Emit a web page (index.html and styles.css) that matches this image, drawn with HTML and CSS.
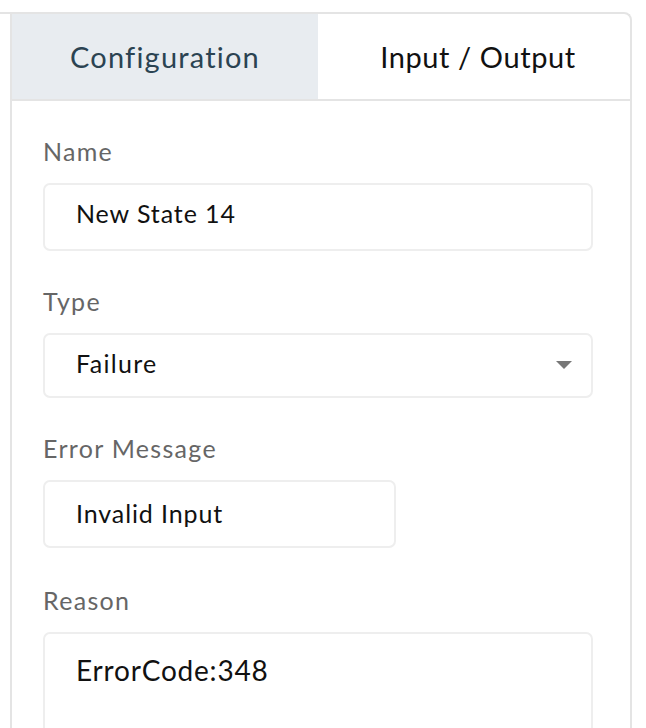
FILE: index.html
```html
<!DOCTYPE html>
<html lang="en">
<head>
<meta charset="utf-8">
<title>State configuration</title>
<link rel="stylesheet" href="styles.css">
</head>
<body>
<div class="frame">
  <div class="panel">
    <div class="inner">
      <div class="tabs">
        <div class="tab tab-active">Configuration</div>
        <div class="tab tab-plain">Input / Output</div>
      </div>
      <div class="form">
        <div class="field">
          <div class="label">Name</div>
          <div class="control">New State 14</div>
        </div>
        <div class="field field-select">
          <div class="label">Type</div>
          <div class="control select">
            <span>Failure</span>
            <span class="caret"></span>
          </div>
        </div>
        <div class="field field-error">
          <div class="label">Error Message</div>
          <div class="control short">Invalid Input</div>
        </div>
        <div class="field">
          <div class="label">Reason</div>
          <div class="control textarea">ErrorCode:348</div>
        </div>
      </div>
    </div>
  </div>
</div>
</body>
</html>
```

FILE: styles.css
```css
* { box-sizing: border-box; }

html, body {
  margin: 0;
  background: #ffffff;
  height: 100%;
  overflow: hidden;
}

body {
  font-family: "Lato", "Open Sans", sans-serif;
  color: #111111;
}

.frame {
  padding-top: 12px;
}

.panel {
  width: 632px;
  border-top: 2px solid #e4e4e4;
  border-right: 2px solid #e4e4e4;
  border-top-right-radius: 8px;
  height: 760px;
}

.inner {
  margin-left: 10px;
  border-left: 2px solid #e4e4e4;
  height: 100%;
}

.tabs {
  display: grid;
  grid-template-columns: 306px 1fr;
  height: 87px;
  border-bottom: 2px solid #e4e4e4;
}

.tab {
  display: flex;
  align-items: center;
  justify-content: center;
  font-size: 29px;
  letter-spacing: 1.2px;
  color: #111111;
}

.tab-plain {
  letter-spacing: 0.6px;
  padding-left: 8px;
}

.tab-active {
  background: #e8ecf0;
  color: #2b4352;
}

.form {
  padding: 36px 37px 0 31px;
}

.field {
  margin-bottom: 36px;
}

.label {
  font-size: 25px;
  line-height: 28px;
  letter-spacing: 1.3px;
  color: #666666;
  margin-bottom: 18px;
}

.control {
  height: 68px;
  border: 2px solid #eeeeee;
  border-radius: 7px;
  padding: 13px 0 0 31px;
  font-size: 25px;
  line-height: 30px;
  letter-spacing: 0.9px;
  color: #111111;
}

.short {
  width: 353px;
  padding-top: 16px;
}

.select {
  height: 65px;
  display: flex;
  align-items: center;
  justify-content: space-between;
  padding: 0 19px 5px 31px;
  letter-spacing: 1.3px;
}

.field-select {
  margin-bottom: 36px;
}

.field-error {
  margin-bottom: 38px;
}

.caret {
  width: 0;
  height: 0;
  margin-top: 3px;
  border-left: 8px solid transparent;
  border-right: 8px solid transparent;
  border-top: 8px solid #777777;
}

.textarea {
  height: 140px;
  padding-top: 19px;
  font-size: 28px;
  line-height: 34px;
  letter-spacing: 0.8px;
}
```
